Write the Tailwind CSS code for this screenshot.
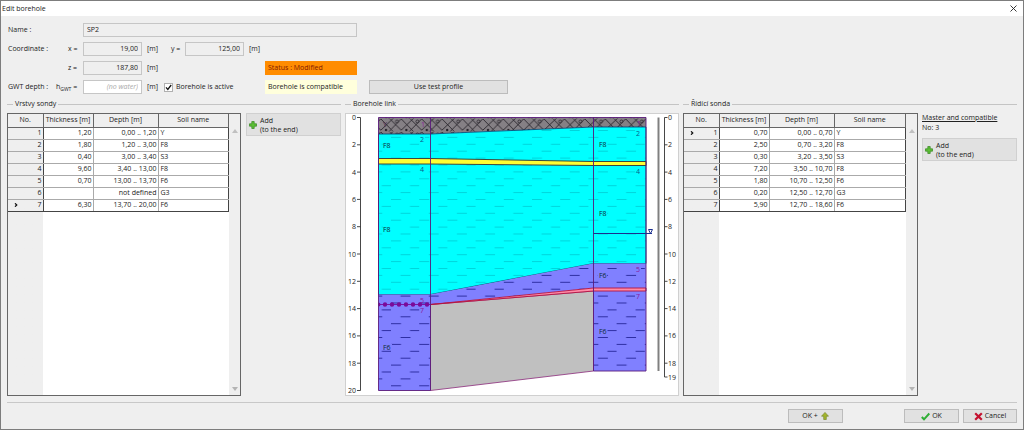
<!DOCTYPE html>
<html lang="en">
<head>
<meta charset="utf-8">
<title>Edit borehole</title>
<script src="https://cdn.jsdelivr.net/npm/@tailwindcss/browser@4"></script>
</head>
<body class="min-h-screen flex flex-col bg-[#efefef] border border-[#7d7d7d] text-[7px] leading-[10px] text-[#222] font-['Open_Sans',sans-serif]">
<header class="flex items-center justify-between h-[15px] bg-white pl-px pr-[6px]">
  <h1>Edit borehole</h1>
  <button aria-label="Close"><svg class="size-[7px]" viewBox="0 0 7 7" fill="none" stroke="#222" stroke-width=".9"><path d="M.5.5l6 6M6.5.5l-6 6"/></svg></button>
</header>

<form class="flex flex-col gap-[5px] pt-[7px] pl-[7px]">
  <div class="flex items-center h-[14px]">
    <label for="name" class="w-[75px]">Name :</label>
    <input id="name" value="SP2" readonly class="w-[274px] h-[14px] border border-[#c6c6c6] px-[3px] pb-px">
  </div>
  <div class="flex items-center h-[14px]">
    <span class="w-[60px]">Coordinate :</span>
    <label for="x" class="w-[15px]">x =</label>
    <input id="x" value="19,00" readonly class="w-[59px] h-[14px] border border-[#c6c6c6] px-[3px] pb-px text-right">
    <span class="w-[29px] pl-[5px]">[m]</span>
    <label for="y" class="w-[14px]">y =</label>
    <input id="y" value="125,00" readonly class="w-[59px] h-[14px] border border-[#c6c6c6] px-[3px] pb-px text-right">
    <span class="pl-[5px]">[m]</span>
  </div>
  <div class="flex items-center h-[14px]">
    <label for="z" class="w-[15px] ml-[60px]">z =</label>
    <input id="z" value="187,80" readonly class="w-[59px] h-[14px] border border-[#c6c6c6] px-[3px] pb-px text-right">
    <span class="w-[123px] pl-[5px]">[m]</span>
    <output class="w-[92px] h-[14px] bg-[#ff8c00] px-[3px] leading-[14px] text-[#801800]">Status : Modified</output>
  </div>
  <div class="flex items-center h-[14px]">
    <span class="w-[48px]">GWT depth :</span>
    <label for="gwt" class="w-[27px] whitespace-nowrap">h<span class="relative top-[2px] text-[5px]">GWT</span> =</label>
    <input id="gwt" placeholder="(no water)" class="w-[59px] h-[14px] bg-white border border-[#c6c6c6] px-[3px] pb-px text-right placeholder:italic placeholder:text-[#aaa]">
    <span class="w-[22px] pl-[5px]">[m]</span>
    <label class="flex items-center w-[101px]">
      <span class="relative size-[9px] mr-[3px]">
        <input type="checkbox" checked class="peer appearance-none block size-[9px] bg-white border border-[#b0b0b0]">
        <svg class="absolute inset-0 size-[9px] hidden peer-checked:block pointer-events-none" viewBox="0 0 9 9" fill="none" stroke="#111" stroke-width="1.3"><path d="M2 4.4l1.800 2L7.200 2"/></svg>
      </span>Borehole is active</label>
    <output class="w-[92px] h-[14px] bg-[#ffffdc] px-[3px] leading-[14px]">Borehole is compatible</output>
    <button type="button" class="ml-[12px] w-[139px] h-[14px] bg-[#e1e1e1] border border-[#bcbcbc]">Use test profile</button>
  </div>
</form>

<main class="flex-1 flex gap-[4px] pt-[4px] px-[6px] pb-[6px]">
  <section class="flex flex-col w-[334px]">
    <h2 class="flex items-center gap-[2px] h-[12px]"><i class="w-[6px] h-px bg-[#c4c4c4]"></i>Vrstvy sondy<i class="flex-1 h-px bg-[#c4c4c4]"></i></h2>
    <div class="flex-1 flex items-start gap-[5px] pt-[3px]">
      <div class="flex self-stretch w-[234px] border border-[#666] bg-white">
        <div class="flex-1 bg-linear-to-r from-[#efefef] from-[35px] to-white to-[35px]">
        <table id="layers" class="w-full h-[98px] table-fixed border-collapse [&_th]:font-normal [&_th]:border [&_th]:border-t-0 [&_th]:border-[#666] [&_th]:bg-[#efefef] [&_td]:border [&_td]:border-[#aaa] [&_td]:h-[12px] [&_td]:px-px [&_td]:leading-[10px] [&_td:nth-child(-n+3)]:text-right [&_td:nth-child(1)]:border-r-[#444] [&_td:nth-child(4)]:border-r-[#444] [&_td:nth-child(4)]:pl-[2px] [&_tr>:first-child]:border-l-0 [&_tr:last-child>td]:border-b-[#444] [&_tr:last-child>td]:border-t-[#444]">
          <colgroup><col class="w-[35px]"><col class="w-[50px]"><col class="w-[65px]"><col></colgroup>
          <thead><tr class="h-[13px]"><th>No.</th><th class="whitespace-nowrap">Thickness [m]</th><th>Depth [m]</th><th>Soil name</th></tr></thead>
          <tbody>
            <tr><td>1</td><td>1,20</td><td>0,00 .. 1,20</td><td>Y</td></tr>
            <tr><td>2</td><td>1,80</td><td>1,20 .. 3,00</td><td>F8</td></tr>
            <tr><td>3</td><td>0,40</td><td>3,00 .. 3,40</td><td>S3</td></tr>
            <tr><td>4</td><td>9,60</td><td>3,40 .. 13,00</td><td>F8</td></tr>
            <tr><td>5</td><td>0,70</td><td>13,00 .. 13,70</td><td>F6</td></tr>
            <tr><td>6</td><td></td><td>not defined</td><td>G3</td></tr>
            <tr><td><span class="flex items-center justify-between pl-[5px]"><svg class="size-[4px]" viewBox="0 0 4 4" fill="none" stroke="#111" stroke-width="1.2"><path d="M1 .3L2.800 2 1 3.700"/></svg>7</span></td><td>6,30</td><td>13,70 .. 20,00</td><td>F6</td></tr>
          </tbody>
        </table>
        </div>
        <div class="w-[11px] flex flex-col justify-between items-center bg-[#efefef]">
          <svg class="w-[6px] h-[4px] mt-[15px]" viewBox="0 0 6 4" fill="#c0c0c0"><path d="M3 0l3 4H0z"/></svg>
          <svg class="w-[6px] h-[4px] mb-[4px]" viewBox="0 0 6 4" fill="#b4b4b4"><path d="M0 0h6L3 4z"/></svg>
        </div>
      </div>
      <button class="flex-1 flex items-center gap-[3px] h-[23px] pl-[2px] bg-[#e1e1e1] border border-[#d0d0d0] text-left leading-[9px]">
        <svg class="size-[8px]" viewBox="0 0 8 8"><path d="M2.800.5h2.400v2.300h2.300v2.400H5.200v2.300H2.800V5.200H.5V2.800h2.300z" fill="#5cbf35" stroke="#35851f" stroke-width=".7"/></svg>
        <span>Add<br>(to the end)</span></button>
    </div>
  </section>

  <section class="flex-1 flex flex-col">
    <h2 class="flex items-center gap-[2px] h-[12px]"><i class="w-[6px] h-px bg-[#c4c4c4]"></i>Borehole link<i class="flex-1 h-px bg-[#c4c4c4]"></i></h2>
    <div class="flex-1 flex pt-[3px]">
    <svg class="w-full bg-white border border-[#d0d0d0]" viewBox="346 114 332 281" font-size="7" fill="#222">
      <defs>
        <pattern id="clay" width="28.2" height="20.7" patternUnits="userSpaceOnUse" x="391" y="302.5"><path d="M0 0.5h10M19 7.4h9.200M9.500 14.300h10" stroke="#26269a" stroke-width=".9" fill="none"/></pattern>
        <pattern id="silt" width="28.2" height="20.7" patternUnits="userSpaceOnUse" x="391" y="302.5"><path d="M0 0.5h10M19 7.4h9.200M9.500 14.300h10" stroke="#00c4cc" stroke-width=".7" fill="none"/></pattern>
        <pattern id="fill" width="20.4" height="13" patternUnits="userSpaceOnUse" x="381" y="119"><path d="M-2 -2l14 14.500M12.500-1L-1 12M9 0l13 13M21-1L8 12.500" stroke="#26232a" stroke-width=".9"/><circle cx="16" cy="2.500" r="1.500" fill="none" stroke="#26232a" stroke-width=".8"/><circle cx="5" cy="11" r="1.200" fill="#26232a"/></pattern>
      </defs>
      <g id="soils">
        <path d="M378.500 117.500H646V127h-52.500L430.500 134h-52z" fill="#858085"/>
        <path d="M378.500 117.500H646V127h-52.500L430.500 134h-52z" fill="url(#fill)"/>
        <path d="M378.500 134h52l163-7H646v136.500h-52.500l-163 31h-52z" fill="#0ff"/>
        <path d="M378.500 134h52l163-7H646v136.500h-52.500l-163 31h-52z" fill="url(#silt)" stroke="#003c6e" stroke-width=".8"/>
        <path d="M378.500 158.500h52l163 3H646v4h-52.500l-163-1.500h-52z" fill="#ff3" stroke="#333" stroke-width=".9"/>
        <path d="M378.500 294.500h52l163-31H646V371h-52.500v-83l-163 16.500v86h-52z" fill="#8080ff"/>
        <path d="M378.500 294.500h52l163-31H646V371h-52.500v-83l-163 16.500v86h-52z" fill="url(#clay)"/>
        <path d="M430.500 304.500l163-13.500v80l-163 19.500z" fill="#c0c0c0" stroke="#8a2a7a" stroke-width=".8"/>
        <path d="M430.500 304.500l163-16.500H646v3h-52.500z" fill="#ff8ca8" stroke="#b3123f" stroke-width=".9"/>
        <path d="M378 304.500h52.500" stroke="#7a0a9a" stroke-width=".9"/>
        <path d="M378.500 302.500a2 2 0 0 1 0 4z" fill="#7a0a9a"/>
        <path d="M385 304.500h43" stroke="#7a0a9a" stroke-width="4.400" stroke-linecap="round" stroke-dasharray="0 7"/>
      </g>
      <g fill="none" stroke="#5a1a7a" stroke-width=".9">
        <path d="M378.500 117.500H646V371h-52.500V117.500M430.500 117.500v273h-52v-273"/>
      </g>
      <path d="M593.500 233.500H652M648.500 229.500h4l-2 4z" fill="none" stroke="#1b2f8f"/>
      <path d="M658.500 117.500V371" stroke="#808080" stroke-width="2"/>
      <path d="M360.500 117.500v273M357 117.500h3.500M357 144.800h3.500M357 172.100h3.500M357 199.400h3.500M357 226.700h3.500M357 254h3.500M357 281.300h3.500M357 308.600h3.500M357 335.900h3.500M357 363.200h3.500M357 390.500h3.500M664.500 117.500v259.500M664.500 117.500h3M664.500 144.800h3M664.500 172.100h3M664.500 199.400h3M664.500 226.700h3M664.500 254h3M664.500 281.300h3M664.500 308.600h3M664.500 335.900h3M664.500 363.200h3M664.500 377h3" fill="none" stroke="#333" stroke-width=".9"/>
      <g text-anchor="end">
        <text x="356" y="120">0</text><text x="356" y="147">2</text><text x="356" y="175">4</text><text x="356" y="202">6</text><text x="356" y="229">8</text><text x="356" y="257">10</text><text x="356" y="284">12</text><text x="356" y="311">14</text><text x="356" y="338">16</text><text x="356" y="366">18</text><text x="356" y="393">20</text>
      </g>
      <g>
        <text x="668" y="120">0</text><text x="668" y="147">2</text><text x="668" y="175">4</text><text x="668" y="202">6</text><text x="668" y="229">8</text><text x="668" y="257">10</text><text x="668" y="284">12</text><text x="668" y="311">14</text><text x="668" y="338">16</text><text x="668" y="366">18</text><text x="668" y="380">19</text>
      </g>
      <g fill="#0ff"><path d="M383 142h8v7h-8zM383 226h8v7h-8zM598 141h9v7h-9zM598 210h9v7h-9zM419 136h6v7h-6zM419 166h6v7h-6zM635 130h6v7h-6zM635 168h6v7h-6z"/></g>
      <g fill="#8080ff"><path d="M383 344h9v6h-9zM598 272h9v8h-9zM598 328h9v7h-9zM635 266h6v7h-6zM635 293h6v7h-6z"/></g>
      <g fill="#0d2c38">
        <text x="383" y="127" fill="#4a1a4a">Y</text><text x="383" y="148">F8</text><text x="383" y="232">F8</text><text x="383" y="350">F6</text>
        <text x="599" y="147">F8</text><text x="599" y="216">F8</text><text x="599" y="278">F6</text><text x="599" y="334">F6</text>
      </g>
      <g fill="#0a5a8a"><text x="420" y="142">2</text><text x="420" y="172">4</text><text x="636" y="136">2</text><text x="636" y="174">4</text></g>
      <g fill="#8a1a9a"><text x="421" y="127">1</text><text x="637" y="126">1</text><text x="420" y="303">5</text><text x="420" y="313">7</text><text x="636" y="272">5</text><text x="636" y="299">7</text></g>
    </svg>
    </div>
  </section>

  <section class="flex flex-col w-[334px]">
    <h2 class="flex items-center gap-[2px] h-[12px]"><i class="w-[6px] h-px bg-[#c4c4c4]"></i>Řídící sonda<i class="flex-1 h-px bg-[#c4c4c4]"></i></h2>
    <div class="flex-1 flex items-start gap-[4px] pt-[3px]">
      <div class="flex self-stretch w-[235px] border border-[#666] bg-white">
        <div class="flex-1 bg-linear-to-r from-[#efefef] from-[35px] to-white to-[35px]">
        <table id="master" class="w-full h-[98px] table-fixed border-collapse [&_th]:font-normal [&_th]:border [&_th]:border-t-0 [&_th]:border-[#666] [&_th]:bg-[#efefef] [&_td]:border [&_td]:border-[#aaa] [&_td]:h-[12px] [&_td]:px-px [&_td]:leading-[10px] [&_td:nth-child(-n+3)]:text-right [&_td:nth-child(1)]:border-r-[#444] [&_td:nth-child(4)]:border-r-[#444] [&_td:nth-child(4)]:pl-[2px] [&_tr>:first-child]:border-l-0 [&_tr:last-child>td]:border-b-[#444]">
          <colgroup><col class="w-[35px]"><col class="w-[50px]"><col class="w-[65px]"><col></colgroup>
          <thead><tr class="h-[13px]"><th>No.</th><th class="whitespace-nowrap">Thickness [m]</th><th>Depth [m]</th><th>Soil name</th></tr></thead>
          <tbody>
            <tr><td><span class="flex items-center justify-between pl-[5px]"><svg class="size-[4px]" viewBox="0 0 4 4" fill="none" stroke="#111" stroke-width="1.2"><path d="M1 .3L2.800 2 1 3.700"/></svg>1</span></td><td>0,70</td><td>0,00 .. 0,70</td><td>Y</td></tr>
            <tr><td>2</td><td>2,50</td><td>0,70 .. 3,20</td><td>F8</td></tr>
            <tr><td>3</td><td>0,30</td><td>3,20 .. 3,50</td><td>S3</td></tr>
            <tr><td>4</td><td>7,20</td><td>3,50 .. 10,70</td><td>F8</td></tr>
            <tr><td>5</td><td>1,80</td><td>10,70 .. 12,50</td><td>F6</td></tr>
            <tr><td>6</td><td>0,20</td><td>12,50 .. 12,70</td><td>G3</td></tr>
            <tr><td>7</td><td>5,90</td><td>12,70 .. 18,60</td><td>F6</td></tr>
          </tbody>
        </table>
        </div>
        <div class="w-[11px] flex flex-col justify-between items-center bg-[#efefef]">
          <svg class="w-[6px] h-[4px] mt-[15px]" viewBox="0 0 6 4" fill="#c0c0c0"><path d="M3 0l3 4H0z"/></svg>
          <svg class="w-[6px] h-[4px] mb-[4px]" viewBox="0 0 6 4" fill="#b4b4b4"><path d="M0 0h6L3 4z"/></svg>
        </div>
      </div>
      <div class="flex-1 flex flex-col">
        <p class="underline">Master and compatible</p>
        <p>No: 3</p>
        <button class="flex items-center gap-[3px] h-[23px] mt-[5px] pl-[2px] bg-[#e1e1e1] border border-[#d0d0d0] text-left leading-[9px]">
          <svg class="size-[8px]" viewBox="0 0 8 8"><path d="M2.800.5h2.400v2.300h2.300v2.400H5.200v2.300H2.800V5.200H.5V2.800h2.300z" fill="#5cbf35" stroke="#35851f" stroke-width=".7"/></svg>
          <span>Add<br>(to the end)</span></button>
      </div>
    </div>
  </section>
</main>

<footer class="flex justify-end mx-[6px] pt-[6px] pb-[6px] border-t border-[#c8c8c8]">
  <button class="flex items-center justify-center gap-[3px] w-[55px] h-[14px] mr-[61px] bg-[#e1e1e1] border border-[#bcbcbc]">OK +
    <svg class="size-[8px]" viewBox="0 0 8 8"><path d="M4 .4l3.500 3.800H5.300v3.300H2.700V4.200H.5z" fill="#a3b52c" stroke="#6f8020" stroke-width=".6"/></svg></button>
  <button class="flex items-center justify-center gap-[2px] w-[55px] h-[14px] mr-[4px] bg-[#e1e1e1] border border-[#bcbcbc]">
    <svg class="size-[9px]" viewBox="0 0 9 9" fill="none" stroke="#2fae35" stroke-width="2"><path d="M.8 5l2.200 2.300L8.300 1.500"/></svg>OK</button>
  <button class="flex items-center justify-center gap-[2px] w-[54px] h-[14px] bg-[#e1e1e1] border border-[#bcbcbc]">
    <svg class="size-[9px]" viewBox="0 0 9 9" fill="none" stroke="#c41230" stroke-width="2.200"><path d="M1.200 1.200l6.600 6.600M7.800 1.200L1.200 7.800"/></svg>Cancel</button>
</footer>
</body>
</html>
